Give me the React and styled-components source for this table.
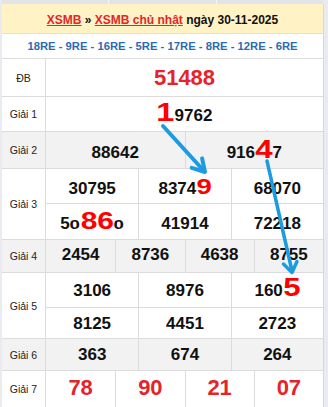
import React from "react";
import styled, { createGlobalStyle } from "styled-components";

const Global = createGlobalStyle`
  html, body { margin: 0; padding: 0; background: #e9ebf0; }
  body { font-family: "Liberation Sans", Arial, sans-serif; }
`;

const Page = styled.div`
  position: relative;
  width: 328px;
  height: 407px;
  overflow: hidden;
`;

const TopStrip = styled.div`
  display: flex;
  width: 321px;
  height: 4px;
  margin-left: 2px;
`;

const StripCell = styled.div`
  flex: 1;
  background: #e2e4e8;
  & + & { border-left: 1px solid #f4f5f7; }
`;

const Board = styled.div`
  width: 322px;
  margin-left: 2px;
  box-sizing: border-box;
  background: #fff;
  border-right: 1px solid #d6d8dc;
`;

const Header = styled.div`
  height: 30px;
  box-sizing: border-box;
  padding-top: 3px;
  display: flex;
  align-items: center;
  justify-content: center;
  background: #fff2c4;
  border-bottom: 1px solid #e6e1cc;
  font-size: 12px;
  font-weight: 700;
  color: #111;
  white-space: pre;
`;

const HeaderLink = styled.a`
  color: #e3262c;
  text-decoration: underline;
`;

const Codes = styled.div`
  height: 25px;
  box-sizing: border-box;
  display: flex;
  align-items: center;
  justify-content: center;
  border-bottom: 1px solid #dcdcdc;
  font-size: 11.25px;
  font-weight: 700;
  color: #2c6bb4;
  white-space: pre;
`;

const Row = styled.div`
  display: grid;
  grid-template-columns: 44px 1fr;
  border-bottom: 1px solid #dcdcdc;
  background: ${(p) => (p.$alt ? "#f2f2f2" : "#fff")};
`;

const Label = styled.div`
  display: flex;
  align-items: center;
  justify-content: center;
  border-right: 1px solid #dcdcdc;
  font-size: 10.5px;
  color: #222;
`;

const Values = styled.div`
  display: flex;
  flex-direction: column;
`;

const Line = styled.div`
  --drop: ${(p) => p.$drop || 0}px;
  display: grid;
  grid-template-columns: repeat(${(p) => p.$cols}, 1fr);
  height: ${(p) => p.$h}px;
  & + & { border-top: 1px solid #dcdcdc; }
`;

const Cell = styled.div`
  display: flex;
  align-items: center;
  justify-content: center;
  min-width: 0;
  & + & { border-left: 1px solid #dcdcdc; }
`;

const Digits = styled.span`
  display: block;
  margin-top: var(--drop, 0px);
  font-size: 17px;
  font-weight: 700;
  line-height: 20px;
  color: #111;
  white-space: nowrap;
`;

const Hot = styled.span`
  display: inline-block;
  font-size: ${(p) => p.$size}px;
  line-height: 0;
  color: #ff0000;
  transform: scaleX(1.25);
  margin: 0 ${(p) => 0.0695 * (p.$n || 1)}em;
`;

const Squat = styled.span`
  display: inline-block;
  line-height: 0;
  transform: scale(1.1, 0.76);
  transform-origin: 50% 0.3465em;
  margin: 0 0.03em;
`;

const Prize = styled.span`
  display: block;
  margin-top: var(--drop, 0px);
  font-size: ${(p) => p.$size || 22}px;
  font-weight: 700;
  color: #e5232b;
  white-space: nowrap;
`;

const Arrows = styled.svg`
  position: absolute;
  left: 0;
  top: 0;
  pointer-events: none;
`;

const Plain = ({ children }) => <Digits>{children}</Digits>;

export default function App() {
  return (
    <Page>
      <Global />
      <TopStrip>
        <StripCell />
        <StripCell />
        <StripCell />
      </TopStrip>
      <Board>
        <Header>
          <HeaderLink>XSMB</HeaderLink>
          {" » "}
          <HeaderLink>XSMB chủ nhật</HeaderLink>
          {" ngày 30-11-2025"}
        </Header>
        <Codes>18RE - 9RE - 16RE - 5RE - 17RE - 8RE - 12RE - 6RE</Codes>

        <Row>
          <Label>ĐB</Label>
          <Values>
            <Line $cols={1} $h={37}>
              <Cell><Prize>51488</Prize></Cell>
            </Line>
          </Values>
        </Row>

        <Row>
          <Label>Giải 1</Label>
          <Values>
            <Line $cols={1} $h={34} $drop={4}>
              <Cell><Digits><Hot $size={26}>1</Hot>9762</Digits></Cell>
            </Line>
          </Values>
        </Row>

        <Row $alt>
          <Label>Giải 2</Label>
          <Values>
            <Line $cols={2} $h={36} $drop={5}>
              <Cell><Plain>88642</Plain></Cell>
              <Cell><Digits>916<Hot $size={25}>4</Hot>7</Digits></Cell>
            </Line>
          </Values>
        </Row>

        <Row>
          <Label>Giải 3</Label>
          <Values>
            <Line $cols={3} $h={34} $drop={5}>
              <Cell><Plain>30795</Plain></Cell>
              <Cell><Digits>8374<Hot $size={22}>9</Hot></Digits></Cell>
              <Cell><Plain>68070</Plain></Cell>
            </Line>
            <Line $cols={3} $h={35} $drop={5}>
              <Cell>
                <Digits>5<Squat>0</Squat><Hot $size={24} $n={2}>86</Hot><Squat>0</Squat></Digits>
              </Cell>
              <Cell><Plain>41914</Plain></Cell>
              <Cell><Plain>72218</Plain></Cell>
            </Line>
          </Values>
        </Row>

        <Row $alt>
          <Label>Giải 4</Label>
          <Values>
            <Line $cols={4} $h={32} $drop={-2}>
              <Cell><Plain>2454</Plain></Cell>
              <Cell><Plain>8736</Plain></Cell>
              <Cell><Plain>4638</Plain></Cell>
              <Cell><Plain>8755</Plain></Cell>
            </Line>
          </Values>
        </Row>

        <Row>
          <Label>Giải 5</Label>
          <Values>
            <Line $cols={3} $h={34} $drop={2}>
              <Cell><Plain>3106</Plain></Cell>
              <Cell><Plain>8976</Plain></Cell>
              <Cell><Digits>160<Hot $size={25}>5</Hot></Digits></Cell>
            </Line>
            <Line $cols={3} $h={30} $drop={2}>
              <Cell><Plain>8125</Plain></Cell>
              <Cell><Plain>4451</Plain></Cell>
              <Cell><Plain>2723</Plain></Cell>
            </Line>
          </Values>
        </Row>

        <Row $alt>
          <Label>Giải 6</Label>
          <Values>
            <Line $cols={3} $h={31}>
              <Cell><Plain>363</Plain></Cell>
              <Cell><Plain>674</Plain></Cell>
              <Cell><Plain>264</Plain></Cell>
            </Line>
          </Values>
        </Row>

        <Row>
          <Label>Giải 7</Label>
          <Values>
            <Line $cols={4} $h={36} $drop={-2}>
              <Cell><Prize>78</Prize></Cell>
              <Cell><Prize>90</Prize></Cell>
              <Cell><Prize>21</Prize></Cell>
              <Cell><Prize>07</Prize></Cell>
            </Line>
          </Values>
        </Row>
      </Board>

      <Arrows width="328" height="407" viewBox="0 0 328 407">
        <g stroke="#1c9be1" strokeWidth="4" strokeLinecap="round" strokeLinejoin="round" fill="none">
          <line x1="163" y1="126" x2="204" y2="171" />
          <polyline points="191.7,167.8 205,172 202.1,158.4" />
          <line x1="267" y1="161" x2="292" y2="271" strokeWidth="3.5" />
          <polyline points="283.5,264 292,272.5 297,261.5" strokeWidth="3.5" />
        </g>
      </Arrows>
    </Page>
  );
}
